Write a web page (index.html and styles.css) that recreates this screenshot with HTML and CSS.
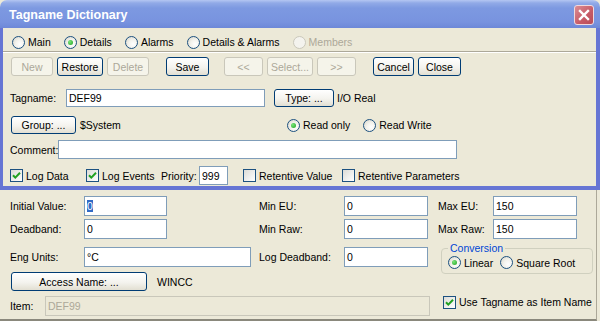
FILE: index.html
```html
<!DOCTYPE html>
<html lang="en">
<head>
    <meta charset="UTF-8">
    <title>Tagname Dictionary</title>
    <link rel="stylesheet" href="styles.css">
</head>
<body>
    <div class="dialog">
        <div class="titlebar">
            <span class="title">Tagname Dictionary</span>
            <span class="close">
                <svg width="12" height="12" viewBox="0 0 12 12">
                    <path d="M2 2 L10 10 M10 2 L2 10" stroke="#fff" stroke-width="2.4" stroke-linecap="square"/>
                </svg>
            </span>
        </div>

        <div class="frame">
            <!-- view selector -->
            <div class="row tabs">
                <span class="opt"><span class="radio"></span>Main</span>
                <span class="opt"><span class="radio on"></span>Details</span>
                <span class="opt"><span class="radio"></span>Alarms</span>
                <span class="opt"><span class="radio"></span>Details &amp; Alarms</span>
                <span class="opt off"><span class="radio"></span>Members</span>
            </div>
            <div class="sep"></div>

            <div class="row buttons">
                <div class="bgroup">
                    <button class="btn w42" disabled>New</button>
                    <button class="btn w46">Restore</button>
                    <button class="btn w42" disabled>Delete</button>
                </div>
                <div class="bgroup g17">
                    <button class="btn w43">Save</button>
                </div>
                <div class="bgroup g15">
                    <button class="btn w39" disabled>&lt;&lt;</button>
                    <button class="btn w46" disabled>Select...</button>
                    <button class="btn w39" disabled>&gt;&gt;</button>
                </div>
                <div class="bgroup g17">
                    <button class="btn w41">Cancel</button>
                    <button class="btn w43">Close</button>
                </div>
            </div>

            <div class="row tagrow">
                <span class="lbl-tag">Tagname:</span>
                <div class="field f-tag">DEF99</div>
                <button class="btn b-type">Type: ...</button>
                <span class="type-val">I/O Real</span>
            </div>

            <div class="row grouprow">
                <button class="btn b-group">Group: ...</button>
                <span class="group-val">$System</span>
                <span class="opt"><span class="radio on"></span>Read only</span>
                <span class="opt"><span class="radio"></span>Read Write</span>
            </div>

            <div class="row commentrow">
                <span class="lbl-comment">Comment:</span>
                <div class="field f-comment"></div>
            </div>

            <div class="row checkrow">
                <span class="chk c-logdata"><span class="box on"><svg width="11" height="11" viewBox="0 0 11 11"><path d="M2 5.2 L4.3 7.6 L9 2.8" stroke="#21a121" stroke-width="2" fill="none"/></svg></span>Log Data</span>
                <span class="chk c-logevents"><span class="box on"><svg width="11" height="11" viewBox="0 0 11 11"><path d="M2 5.2 L4.3 7.6 L9 2.8" stroke="#21a121" stroke-width="2" fill="none"/></svg></span>Log Events</span>
                <span class="lbl-prio">Priority:</span>
                <div class="field f-prio">999</div>
                <span class="chk c-retval"><span class="box"></span>Retentive Value</span>
                <span class="chk"><span class="box"></span>Retentive Parameters</span>
            </div>
        </div>

        <div class="panel">
            <div class="fields">
                <div class="frow">
                    <span class="l1">Initial Value:</span>
                    <div class="field f83"><span class="sel">0</span></div>
                    <span class="l2">Min EU:</span>
                    <div class="field f84">0</div>
                </div>
                <div class="frow r2">
                    <span class="l1">Deadband:</span>
                    <div class="field f83">0</div>
                    <span class="l2">Min Raw:</span>
                    <div class="field f84">0</div>
                </div>
                <div class="frow r3">
                    <span class="l1">Eng Units:</span>
                    <div class="field f-units">°C</div>
                    <span class="l2 near">Log Deadband:</span>
                    <div class="field f84">0</div>
                </div>
                <div class="frow r4">
                    <button class="btn b-access">Access Name: ...</button>
                    <span class="access-val">WINCC</span>
                </div>
                <div class="frow r5">
                    <span class="l-item">Item:</span>
                    <div class="field dis f-item">DEF99</div>
                </div>
            </div>

            <div class="side">
                <div class="frow">
                    <span class="l3">Max EU:</span>
                    <div class="field f84">150</div>
                </div>
                <div class="frow r2">
                    <span class="l3">Max Raw:</span>
                    <div class="field f84">150</div>
                </div>
                <fieldset class="conv">
                    <legend>Conversion</legend>
                    <span class="opt"><span class="radio on"></span>Linear</span>
                    <span class="opt"><span class="radio"></span>Square Root</span>
                </fieldset>
                <div class="chkrow">
                    <span class="chk"><span class="box on"><svg width="11" height="11" viewBox="0 0 11 11"><path d="M2 5.2 L4.3 7.6 L9 2.8" stroke="#21a121" stroke-width="2" fill="none"/></svg></span>Use Tagname as Item Name</span>
                </div>
            </div>
        </div>
    </div>
</body>
</html>
```

FILE: styles.css
```css
* {
    box-sizing: border-box;
}
body {
    margin: 0;
    background: #ece9d8;
    font-family: "Liberation Sans", Arial, sans-serif;
    font-size: 10.5px;
    color: #000;
}
.dialog {
    width: 600px;
    height: 321px;
    overflow: hidden;
}

/* title bar */
.titlebar {
    height: 28px;
    display: flex;
    align-items: center;
    justify-content: space-between;
    padding: 0 6px 0 9px;
    background: linear-gradient(#b4c6f2 0, #91aae7 3px, #7d99e1 8px, #7893df 22px, #6d88d8 28px);
    border-radius: 7px 7px 0 0;
}
.title {
    color: #fff;
    font-weight: bold;
    font-size: 12.5px;
    padding-top: 2px;
}
.close {
    width: 20px;
    height: 20px;
    margin-top: 2px;
    border: 1px solid #f1d9dc;
    border-radius: 3px;
    background: linear-gradient(135deg, #dc8d94, #c65a66 60%, #b84c58);
    display: flex;
    align-items: center;
    justify-content: center;
}

/* upper window part */
.frame {
    border: solid #6675d4;
    border-width: 0 4px 4px 3px;
    padding: 7px 0 1px 7px;
}
.row {
    display: flex;
    align-items: center;
}
.tabs {
    height: 14px;
    margin-left: 2px;
}
.opt {
    display: inline-flex;
    align-items: center;
    gap: 3px;
    margin-right: 13px;
    white-space: nowrap;
}
.opt.off {
    color: #aca899;
}
.radio {
    flex: none;
    width: 13px;
    height: 13px;
    border-radius: 50%;
    border: 1px solid #1c5180;
    background: radial-gradient(circle at 65% 65%, #fff 0, #f3f2ec 45%, #d4d2c6 100%);
    position: relative;
}
.off .radio {
    border-color: #cac8bb;
    background: #f4f3ee;
}
.radio.on::after {
    content: "";
    position: absolute;
    left: 3px;
    top: 3px;
    width: 5px;
    height: 5px;
    border-radius: 50%;
    background: radial-gradient(circle at 35% 35%, #7ae67a, #21a121);
}
.sep {
    height: 2px;
    margin: 2px 0 0 -7px;
    border-top: 1px solid #aca899;
    border-bottom: 1px solid #fff;
}

.buttons {
    margin: 4px 0 0 1px;
}
.bgroup {
    display: flex;
    gap: 4px;
}
.g17 { margin-left: 17px; }
.g15 { margin-left: 15px; }

.btn {
    height: 19px;
    padding: 0;
    border: 1px solid #003c74;
    border-radius: 3px;
    background: linear-gradient(#ffffff, #f4f3ee 55%, #e2dfd2);
    font: inherit;
    color: #000;
    white-space: nowrap;
}
.btn:disabled {
    border-color: #c9c7ba;
    color: #aca899;
    background: #f5f4ea;
}
.w39 { width: 39px; }
.w41 { width: 41px; }
.w42 { width: 42px; }
.w43 { width: 43px; }
.w46 { width: 46px; }

.field {
    flex: none;
    display: flex;
    align-items: center;
    height: 20px;
    padding-left: 2px;
    border: 1px solid #7f9db9;
    background: #fff;
    white-space: nowrap;
}
.field.dis {
    background: #ece9d8;
    border-color: #c9c7ba;
    color: #aca899;
}
.sel {
    background: #316ac5;
    color: #fff;
    line-height: 12px;
}

.tagrow {
    margin-top: 13px;
}
.lbl-tag {
    width: 56px;
}
.f-tag {
    width: 199px;
    height: 18px;
}
.b-type {
    width: 60px;
    height: 18px;
    margin-left: 9px;
}
.type-val {
    margin-left: 3px;
}

.grouprow {
    margin-top: 9px;
}
.b-group {
    width: 65px;
    height: 18px;
    margin-left: 1px;
}
.group-val {
    width: 207px;
    margin-left: 4px;
}

.commentrow {
    margin-top: 6px;
}
.lbl-comment {
    width: 48px;
}
.f-comment {
    width: 399px;
    height: 19px;
}

.checkrow {
    margin-top: 7px;
}
.chk {
    display: inline-flex;
    align-items: center;
    gap: 3px;
    white-space: nowrap;
}
.box {
    flex: none;
    width: 13px;
    height: 13px;
    border: 1px solid #1c5180;
    background: linear-gradient(135deg, #dcdcd7, #fff);
    display: flex;
    align-items: center;
    justify-content: center;
}
.c-logdata { width: 76px; }
.c-logevents { width: 75px; }
.lbl-prio { width: 38px; }
.f-prio {
    width: 29px;
    height: 19px;
    margin-right: 15px;
}
.c-retval { width: 99px; }

/* lower panel */
.panel {
    width: 597px;
    height: 131px;
    display: flex;
    padding: 6px 0 0 10px;
    border-right: 1px solid #aca899;
    border-bottom: 2px solid #8a887c;
}
.fields {
    width: 420px;
}
.frow {
    display: flex;
    align-items: center;
    height: 20px;
}
.r2 { margin-top: 3px; }
.r3 { margin-top: 8px; }
.r4 { margin-top: 5px; height: 19px; }
.r5 { margin-top: 5px; }
.l1 { width: 74px; }
.l2 {
    width: 85px;
    margin-left: 92px;
}
.l2.near { margin-left: 8px; }
.f83 { width: 83px; }
.f84 { width: 84px; }
.f-units { width: 167px; }
.b-access {
    width: 136px;
    margin-left: 1px;
}
.access-val {
    margin-left: 10px;
}
.l-item { width: 35px; }
.f-item { width: 385px; }

.side {
    margin-left: 8px;
}
.l3 { width: 55px; }
.conv {
    width: 152px;
    margin: 3px 0 0 3px;
    padding: 2px 0 4px 6px;
    border: 1px solid #d0d0bf;
    border-radius: 4px;
    min-width: 0;
    display: flex;
    align-items: center;
}
.conv legend {
    padding: 0 2px;
    color: #0046d5;
    line-height: 12px;
}
.conv .opt {
    margin-right: 7px;
}
.chkrow {
    margin: 21px 0 0 5px;
    height: 14px;
    display: flex;
    align-items: center;
}
```
